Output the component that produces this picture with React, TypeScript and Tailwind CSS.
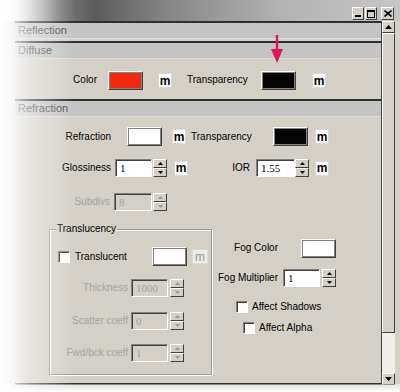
import type { ReactNode } from 'react';

// ── Small Win32-style widgets ────────────────────────────────────────────────

const raised =
  'border border-t-white border-l-white border-b-[#404040] border-r-[#404040]';
const sunken =
  'border border-t-[#808080] border-l-[#808080] border-b-white border-r-white shadow-[inset_1px_1px_0_#404040]';

function Swatch({ color, className = '' }: { color: string; className?: string }) {
  return (
    <div className={`h-[19px] w-[35px] ${raised} ${className}`}>
      <div className="h-full w-full border border-[#808080]" style={{ background: color }} />
    </div>
  );
}

function MButton({ className = '', disabled = false }: { className?: string; disabled?: boolean }) {
  return (
    <div
      className={`flex h-[15px] w-[14px] items-center justify-center border ${
        disabled ? 'border-[#dcdcdc] bg-[#ecebe7] text-[#9a9a9a] font-normal' : 'border-[#d8d8d8] bg-white text-black font-bold'
      } text-[12px] leading-none ${className}`}
    >
      m
    </div>
  );
}

function Arrow({ up, disabled }: { up: boolean; disabled?: boolean }) {
  return (
    <svg width="5" height="3" viewBox="0 0 5 3">
      <path d={up ? 'M2.5 0L5 3H0Z' : 'M0 0H5L2.5 3Z'} fill={disabled ? '#9a9a9a' : '#000'} />
    </svg>
  );
}

function Spinner({ disabled = false, className = '' }: { disabled?: boolean; className?: string }) {
  return (
    <div className={`flex h-[18px] w-[14px] flex-col ${className}`}>
      <div className={`flex h-[9px] items-center justify-center bg-[#d4d0c8] ${raised}`}>
        <Arrow up disabled={disabled} />
      </div>
      <div className={`flex h-[9px] items-center justify-center bg-[#d4d0c8] ${raised}`}>
        <Arrow up={false} disabled={disabled} />
      </div>
    </div>
  );
}

function NumField({
  value,
  width,
  disabled = false,
  className = '',
}: {
  value: string;
  width: string;
  disabled?: boolean;
  className?: string;
}) {
  return (
    <div
      className={`flex h-[18px] items-center pl-[4px] text-[11px] ${sunken} ${width} ${
        disabled ? 'bg-[#d4d0c8] text-[#a0a0a0]' : 'bg-white text-black'
      } ${className}`}
      style={{ fontFamily: '"Liberation Serif", serif' }}
    >
      {value}
    </div>
  );
}

function Check({ className = '' }: { className?: string }) {
  return <div className={`h-[12px] w-[12px] bg-white ${sunken} ${className}`} />;
}

function Label({ children, className = '', muted = false }: { children: ReactNode; className?: string; muted?: boolean }) {
  return (
    <div className={`text-[10px] leading-none whitespace-nowrap ${muted ? 'text-[#a3a3a3]' : 'text-black'} ${className}`}>
      {children}
    </div>
  );
}

function RolloutHeader({ title }: { title: string }) {
  return (
    <div className="border-t-2 border-[#2e2e2e]">
      <div className="flex h-[16px] items-center border-b border-[#dedede] bg-[#c4c4c4] pl-[3px] text-[11px] text-[#4a4a4a]">
        {title}
      </div>
    </div>
  );
}

// ── Main ─────────────────────────────────────────────────────────────────────

export default function App() {
  return (
    <div
      className="relative h-[392px] w-[400px] overflow-hidden bg-[#d4d0c8]"
      style={{ fontFamily: '"Liberation Sans", Arial, sans-serif' }}
    >
      {/* Title bar */}
      <div className="flex h-[21px] items-end justify-end bg-[linear-gradient(to_right,#ffffff_0px,#e6e6e6_18px,#7c7c7c_58px,#5c5c5c_95px,#878787_170px,#b2b2b2_280px,#c6c6c6_400px)] pr-[6px] pb-[1px]">
        <div className="flex gap-[1px]">
          <div className={`flex h-[13px] w-[12px] items-end justify-center bg-[#d4d0c8] pb-[2px] ${raised}`}>
            <div className="h-[2px] w-[6px] bg-black" />
          </div>
          <div className={`mr-[3px] flex h-[13px] w-[12px] items-center justify-center bg-[#d4d0c8] ${raised}`}>
            <div className="h-[8px] w-[8px] border border-t-2 border-black" />
          </div>
          <div className={`flex h-[13px] w-[13px] items-center justify-center bg-[#d4d0c8] ${raised}`}>
            <svg width="8" height="7" viewBox="0 0 8 7">
              <path d="M0.5 0.5L7.5 6.5M7.5 0.5L0.5 6.5" stroke="#000" strokeWidth="1.6" />
            </svg>
          </div>
        </div>
      </div>

      <div className="flex">
        <div className="w-[15px]" />

        {/* Panel */}
        <div className="flex h-[364px] w-[366px] flex-col border-b-2 border-[#2e2e2e]">
          <RolloutHeader title="Reflection" />
          <div className="h-[2px]" />
          <RolloutHeader title="Diffuse" />
          <div className="flex h-[40px] items-start pt-[12px]">
            <Label className="w-[82px] pt-[4px] text-right">Color</Label>
            <Swatch color="#f0290f" className="ml-[11px]" />
            <MButton className="ml-[15px] mt-[2px]" />
            <Label className="ml-[15px] w-[74px] pt-[4px]">Transparency</Label>
            <Swatch color="#050505" className="ml-0" />
            <MButton className="ml-[16px] mt-[2px]" />
          </div>
          <RolloutHeader title="Refraction" />

          <div className="flex flex-col pt-[10px]">
            {/* Refraction / Transparency */}
            <div className="flex h-[19px] items-center">
              <Label className="w-[96px] text-right">Refraction</Label>
              <Swatch color="#ffffff" className="ml-[16px]" />
              <MButton className="ml-[10px]" />
              <Label className="ml-[5px] w-[82px]">Transparency</Label>
              <Swatch color="#050505" />
              <MButton className="ml-[7px]" />
            </div>

            {/* Glossiness / IOR */}
            <div className="mt-[13px] flex h-[18px] items-center">
              <Label className="w-[96px] text-right">Glossiness</Label>
              <NumField value="1" width="w-[37px]" className="ml-[4px]" />
              <Spinner className="ml-[1px]" />
              <MButton className="ml-[7px]" />
              <Label className="w-[62px] text-right">IOR</Label>
              <NumField value="1.55" width="w-[39px]" className="ml-[6px]" />
              <Spinner />
              <MButton className="ml-[6px]" />
            </div>

            {/* Subdivs */}
            <div className="mt-[16px] flex h-[18px] items-center">
              <Label muted className="w-[95px] text-right">Subdivs</Label>
              <NumField value="8" width="w-[38px]" disabled className="ml-[4px]" />
              <Spinner disabled className="ml-[1px]" />
            </div>

            <div className="mt-[18px] flex">
              {/* Translucency group */}
              <div className="relative ml-[34px] flex h-[146px] w-[163px] flex-col border border-[#9a9a9a] shadow-[inset_1px_1px_0_#ffffff,1px_1px_0_#ffffff]">
                <div className="absolute -top-[7px] left-[6px] bg-[#d4d0c8] px-[1px] text-[10px] leading-[12px] text-black">
                  Translucency
                </div>
                <div className="mt-[17px] flex h-[19px] items-center">
                  <Check className="ml-[8px]" />
                  <Label className="ml-[5px] w-[77px]">Translucent</Label>
                  <Swatch color="#ffffff" />
                  <MButton disabled className="ml-[5px] w-[16px]" />
                </div>
                <div className="mt-[13px] flex h-[18px] items-center">
                  <Label muted className="w-[78px] text-right">Thickness</Label>
                  <NumField value="1000" width="w-[37px]" disabled className="ml-[3px]" />
                  <Spinner disabled className="ml-[2px]" />
                </div>
                <div className="mt-[15px] flex h-[18px] items-center">
                  <Label muted className="w-[78px] text-right">Scatter coeff</Label>
                  <NumField value="0" width="w-[37px]" disabled className="ml-[3px]" />
                  <Spinner disabled className="ml-[2px]" />
                </div>
                <div className="mt-[14px] flex h-[18px] items-center">
                  <Label muted className="w-[78px] text-right">Fwd/bck coeff</Label>
                  <NumField value="1" width="w-[37px]" disabled className="ml-[3px]" />
                  <Spinner disabled className="ml-[2px]" />
                </div>
              </div>

              {/* Fog column */}
              <div className="flex flex-col">
                <div className="mt-[10px] flex h-[18px] items-center">
                  <Label className="w-[66px] text-right">Fog Color</Label>
                  <Swatch color="#ffffff" className="ml-[23px] h-[18px]" />
                </div>
                <div className="mt-[12px] flex h-[18px] items-center">
                  <Label className="w-[66px] text-right">Fog Multiplier</Label>
                  <NumField value="1" width="w-[37px]" className="ml-[5px]" />
                  <Spinner className="ml-[2px]" />
                </div>
                <div className="mt-[13px] flex h-[13px] items-center">
                  <Check className="ml-[24px]" />
                  <Label className="ml-[4px]">Affect Shadows</Label>
                </div>
                <div className="mt-[8px] flex h-[13px] items-center">
                  <Check className="ml-[31px]" />
                  <Label className="ml-[4px]">Affect Alpha</Label>
                </div>
              </div>
            </div>
          </div>
        </div>

        {/* Scrollbar */}
        <div className="flex h-[364px] w-[14px] flex-col border-l border-[#404040] bg-[#ebe9e4]">
          <div className={`flex h-[12px] items-center justify-center bg-[#d4d0c8] ${raised}`}>
            <svg width="7" height="4" viewBox="0 0 7 4"><path d="M3.5 0L7 4H0Z" fill="#000" /></svg>
          </div>
          <div className={`h-[300px] bg-[#d4d0c8] ${raised}`} />
          <div className="flex-1 bg-[#efeeea]" />
          <div className={`flex h-[12px] items-center justify-center bg-[#d4d0c8] ${raised}`}>
            <svg width="7" height="4" viewBox="0 0 7 4"><path d="M0 0H7L3.5 4Z" fill="#000" /></svg>
          </div>
        </div>
        <div className="w-[5px]" />
      </div>

      {/* Red pointer arrow annotation */}
      <svg className="absolute left-[270px] top-[35px]" width="14" height="28" viewBox="0 0 14 28">
        <path d="M7 0V16" stroke="#e2145a" strokeWidth="2.4" />
        <path d="M1 14L7 28L13 14Z" fill="#e2145a" />
      </svg>

      {/* Soft white vignette on the left and bottom edges */}
      <div className="pointer-events-none absolute inset-0 bg-[linear-gradient(to_right,rgba(255,255,255,1)_0px,rgba(255,255,255,0.85)_10px,rgba(255,255,255,0.45)_30px,rgba(255,255,255,0)_75px)]" />
      <div className="pointer-events-none absolute inset-x-0 bottom-0 h-[8px] bg-[linear-gradient(to_top,rgba(255,255,255,0.95),rgba(255,255,255,0.4))]" />
    </div>
  );
}
